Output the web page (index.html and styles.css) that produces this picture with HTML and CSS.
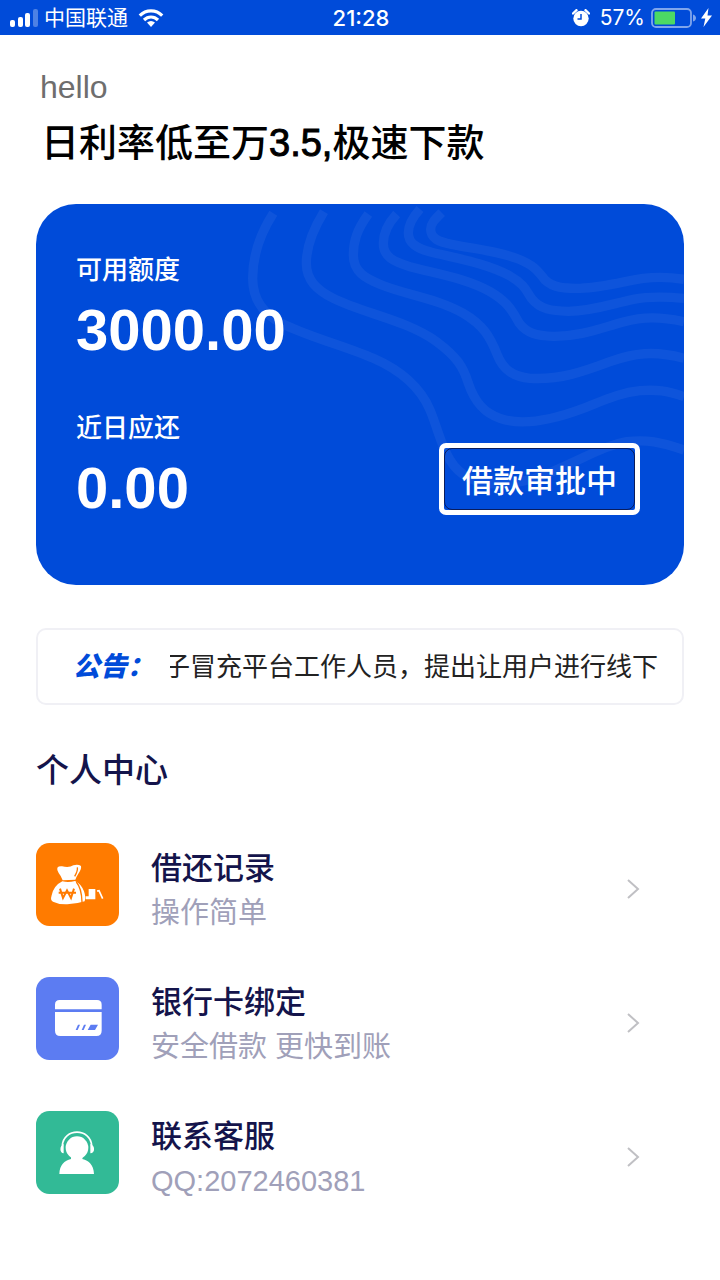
FILE: index.html
```html
<!DOCTYPE html>
<html lang="zh-CN">
<head>
<meta charset="utf-8">
<meta name="viewport" content="width=device-width, initial-scale=1">
<title>个人中心</title>
<link rel="stylesheet" href="styles.css">
</head>
<body>
<header class="status">
  <div class="status-side">
    <svg width="28" height="18" viewBox="0 0 28 18" fill="#fff" aria-hidden="true">
      <rect x="0" y="11" width="5" height="7" rx="2"/><rect x="8" y="8" width="5" height="10" rx="2"/><rect x="15" y="4" width="5" height="14" rx="2"/><rect x="23" y="0" width="5" height="18" rx="2" opacity=".3"/>
    </svg>
    <span class="carrier">中国联通</span>
    <svg class="wifi" width="26" height="18" viewBox="0 0 26 18" fill="none" stroke="#fff" stroke-width="3.2" aria-hidden="true">
      <path d="M1.8 6.6C8 .3 18 .3 24.2 6.6M6 11c4-4 10-4 14 0"/><path d="M9 13.6c2.500-2 5.500-2 8 0L13 18z" fill="#fff" stroke="none"/>
    </svg>
  </div>
  <time class="clock">21:28</time>
  <div class="status-side status-end">
    <svg width="18" height="18" viewBox="0 0 18 18" aria-hidden="true">
      <circle cx="9" cy="9.500" r="7.700" fill="#fff"/><path d="M1 4.500 4.500 1.200M17 4.500l-3.500-3.300" stroke="#fff" stroke-width="2.400" stroke-linecap="round"/><path d="M9 5v5H5.500" fill="none" stroke="#004bd9" stroke-width="1.500"/>
    </svg>
    <span class="percent">57%</span>
    <svg width="45" height="20" viewBox="0 0 45 20" aria-hidden="true">
      <rect x="1" y="1" width="39" height="18" rx="4" fill="none" stroke="#7fa5ec" stroke-width="1.800"/><rect x="3.500" y="3.500" width="20.500" height="13" rx="1" fill="#4cd964"/><path d="M42 6.500c4 1 4 6 0 7z" fill="#7fa5ec"/>
    </svg>
    <svg class="bolt" width="11" height="19" viewBox="0 0 11 19" aria-hidden="true"><path d="M7.500 0 0 10.500h4.300L2.500 19 11 7.500H6.500z" fill="#fff"/></svg>
  </div>
</header>
<main class="page">
  <p class="hello">hello</p>
  <h1 class="title">日利率低至万<span class="rate">3.5,</span>极速下款</h1>

  <section class="card">
    <svg class="waves" viewBox="0 12 1362 948" fill="none" stroke="#fff" stroke-opacity=".055" stroke-width="28" aria-hidden="true">
      <path d="M130 40C85 110 68 180 68 235C68 300 100 345 165 375C250 415 350 440 430 475C510 510 570 560 600 630C625 690 630 730 660 780C720 880 870 865 1000 800C1080 765 1130 735 1190 725C1250 718 1290 725 1362 750"/>
      <path d="M282 35C245 95 229 150 229 190C229 240 260 270 310 295C400 340 530 360 620 425C680 470 700 500 715 550C735 610 765 640 810 655C880 680 980 655 1060 625C1120 602 1170 578 1230 572C1280 568 1310 572 1362 590"/>
      <path d="M415 42C380 90 370 125 370 165C370 215 405 235 455 255C530 285 620 295 700 340C760 375 780 410 802 465C820 510 850 530 900 535C990 540 1060 515 1140 485C1210 460 1270 450 1362 475"/>
      <path d="M500 42C470 75 460 105 460 130C460 170 490 185 540 200C620 222 710 235 780 275C840 310 850 340 868 370C890 400 920 407 970 409C1050 410 1110 385 1180 366C1240 350 1290 350 1362 365"/>
      <path d="M570 27C545 55 535 75 535 98C535 130 560 145 605 157C680 175 770 190 840 228C885 253 890 275 905 296C930 328 965 333 1015 334C1090 333 1150 310 1210 298C1260 288 1310 290 1362 295"/>
      <path d="M635 38C615 58 602 70 602 88C602 115 625 125 665 133C730 147 800 152 865 177C915 197 925 215 945 240C970 263 1000 266 1050 265C1120 263 1190 242 1240 235C1280 230 1320 231 1362 238"/>
    </svg>
    <div class="amounts">
      <p class="label">可用额度</p>
      <p class="amount">3000.00</p>
      <p class="label label-due">近日应还</p>
      <p class="amount">0.00</p>
    </div>
    <button class="apply" type="button">借款审批中</button>
  </section>

  <section class="notice">
    <strong class="notice-tag">公告：</strong>
    <div class="ticker"><span>子冒充平台工作人员，提出让用户进行线下</span></div>
  </section>

  <h2 class="heading">个人中心</h2>
  <nav class="menu">
    <a class="item" href="#records">
      <svg class="icon" viewBox="18 22 249 249" aria-hidden="true">
        <rect x="18" y="22" width="249" height="249" rx="40" fill="#ff7b00"/>
        <path d="M82 96q4-5 14-4 22 5 34-3 14-4 23 2 2 10-8 23-6 9-9 18l-38 2q-4-12-12-22-6-9-4-16z" fill="#fff"/>
        <path d="M97 137q19 4 38-1 18 8 27 31 6 17 2 30-24 8-52 9-25 1-43-8-9-3-4-19 6-29 32-42z" fill="#fff"/>
        <path d="M142 95q2 10-8 27M139 139q16 19 17 60" fill="none" stroke="#ff7b00" stroke-width="4"/>
        <path d="m90 159 9 28 12-23 12 23 9-28M86 171h52" fill="none" stroke="#ff7b00" stroke-width="6"/>
        <path d="M176 160h20v31h-29v-9h9z" fill="#fff"/><path d="m201 166 6-1 11 24" fill="none" stroke="#fff" stroke-width="5"/>
      </svg>
      <span class="text"><span class="name">借还记录</span><span class="note">操作简单</span></span>
      <svg class="arrow" viewBox="0 0 14 20" aria-hidden="true"><path d="m2 1 10 9-10 9"/></svg>
    </a>
    <a class="item" href="#cards">
      <svg class="icon" viewBox="0 0 249 249" aria-hidden="true">
        <rect width="249" height="249" rx="40" fill="#5c7cf2"/>
        <path d="M57 97V83q0-14 14-14h112q14 0 14 14v14zM57 105h140v56q0 16-16 16H73q-16 0-16-16z" fill="#fff"/>
        <path d="m119 159 7-16h6l-7 16zM137 159l7-16h6l-7 16zM155 159l9-16h22l-9 16z" fill="#5c7cf2"/>
      </svg>
      <span class="text"><span class="name">银行卡绑定</span><span class="note">安全借款 更快到账</span></span>
      <svg class="arrow" viewBox="0 0 14 20" aria-hidden="true"><path d="m2 1 10 9-10 9"/></svg>
    </a>
    <a class="item" href="#support">
      <svg class="icon" viewBox="0 0 249 249" aria-hidden="true">
        <rect width="249" height="249" rx="40" fill="#32ba96"/>
        <circle cx="123" cy="110" r="34" fill="#fff"/><path d="M105 132h36l-2 12c20 5 34 18 35 45H70c1-27 15-40 35-45z" fill="#fff"/>
        <path d="M79 104c3-54 85-54 88 0" fill="none" stroke="#fff" stroke-width="5"/><path d="M83 99v28c-13 0-13-24 0-28zM163 99v28c15 0 15-24 0-28z" fill="#fff"/>
      </svg>
      <span class="text"><span class="name">联系客服</span><span class="note">QQ:2072460381</span></span>
      <svg class="arrow" viewBox="0 0 14 20" aria-hidden="true"><path d="m2 1 10 9-10 9"/></svg>
    </a>
  </nav>
</main>
</body>
</html>
```
FILE: styles.css
```css
* { box-sizing: border-box; }
body {
  margin: 0;
  background: #fff;
  color: #000;
  font-family: "Liberation Sans", "Noto Sans CJK SC", sans-serif;
}
p, h1, h2 { margin: 0; }
svg { display: block; flex: none; }

.status {
  display: grid;
  grid-template-columns: 1fr auto 1fr;
  align-items: center;
  height: 35px;
  padding: 0 8px 0 10px;
  background: #004bd9;
  color: #fff;
}
.status-side { display: flex; align-items: center; }
.status-end { justify-content: flex-end; }
.carrier { margin: 0 10px 0 6px; font-size: 21px; line-height: 34px; }
.clock { font: 500 22px/34px Inter, sans-serif; }
.percent { margin: 0 6px 0 10px; font: 21px/34px Inter, sans-serif; }
.bolt { margin-left: 5px; }

.page { padding: 34px 36px; }
.hello { padding-left: 4px; color: #6e6e6e; font-size: 32px; line-height: 36px; }
.title { padding-left: 5px; margin-top: 10px; font-size: 38px; font-weight: 500; line-height: 56px; }
.rate { -webkit-text-stroke: 1px #000; }

.card {
  position: relative;
  display: flex;
  justify-content: space-between;
  align-items: flex-end;
  margin-top: 33px;
  padding: 46px 44px 57px 40px;
  border-radius: 40px;
  overflow: hidden;
  background: #004bd9;
  color: #fff;
}
.waves { position: absolute; top: 0; right: 0; width: 454px; height: 316px; }
.amounts { position: relative; }
.label { font-size: 26px; font-weight: 500; line-height: 40px; }
.label-due { margin-top: 38px; }
.amount { font-size: 58px; font-weight: 700; line-height: 80px; }
.apply {
  position: relative;
  margin-bottom: 13px;
  padding: 12px 18px;
  border: 5px solid #fff;
  border-radius: 7px;
  background: transparent;
  color: #fff;
  font: 500 31px/38px "Noto Sans CJK SC", sans-serif;
}
.apply::before {
  content: "";
  position: absolute;
  inset: 0;
  border: 1px solid #0a1c5c;
  border-radius: 8px;
}

.notice {
  display: flex;
  align-items: center;
  height: 77px;
  margin-top: 43px;
  padding: 0 24px 0 35px;
  border: 2px solid #f0f0f5;
  border-radius: 10px;
}
.notice-tag { flex: none; width: 97px; color: #004bd9; font-size: 27px; font-weight: 900; font-style: italic; line-height: 40px; white-space: nowrap; }
.ticker { display: flex; flex: 1; justify-content: flex-end; overflow: hidden; color: #222; font-size: 26px; line-height: 40px; white-space: nowrap; }

.heading { margin-top: 42px; color: #14144b; font-size: 33px; font-weight: 500; line-height: 48px; }
.menu { display: grid; gap: 42px; margin-top: 48px; }
.item { display: flex; align-items: center; padding-right: 44px; color: inherit; text-decoration: none; }
.icon { align-self: flex-start; width: 83px; height: 83px; }
.text { display: grid; flex: 1; padding-top: 4px; margin-left: 32px; }
.name { color: #14144b; font-size: 31px; font-weight: 500; line-height: 44px; }
.note { color: #a0a0b9; font-size: 29px; line-height: 44px; }
.arrow { width: 14px; height: 20px; fill: none; stroke: #c0c0c4; stroke-width: 2; }
```
